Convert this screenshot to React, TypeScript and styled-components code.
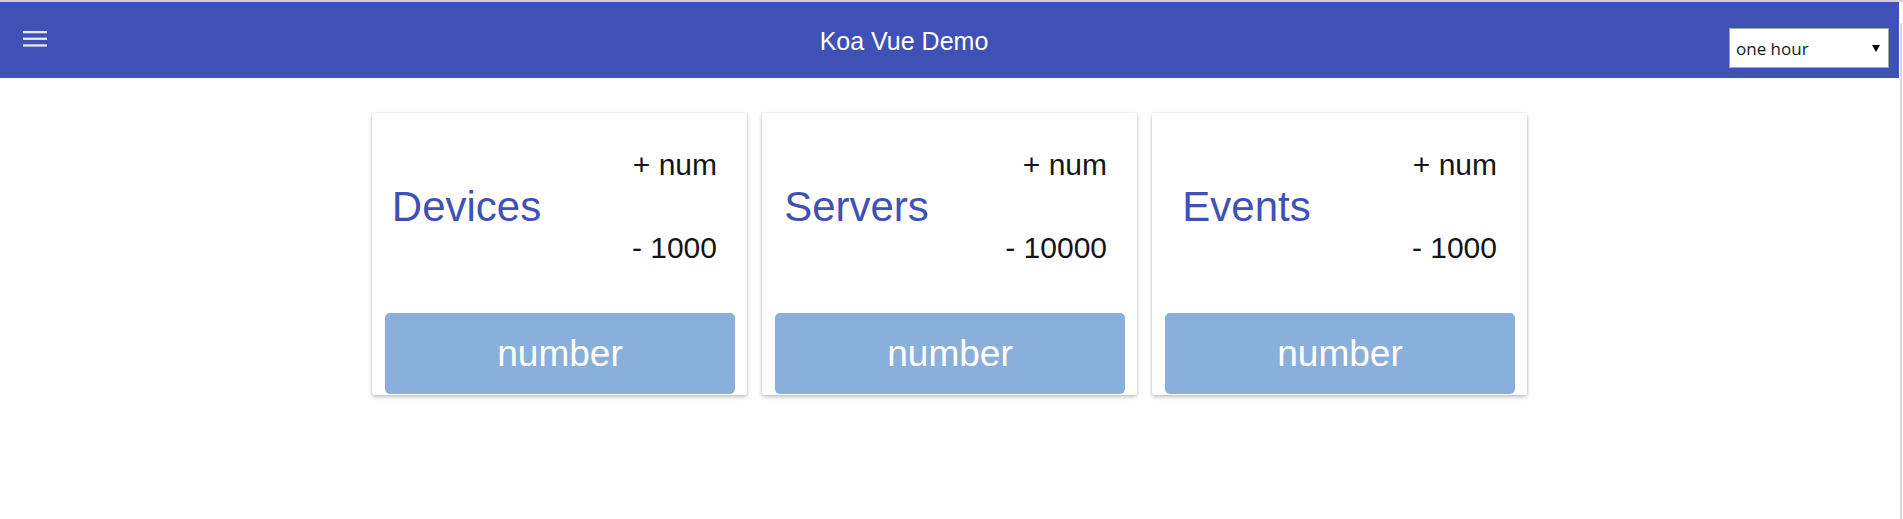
import React from "react";
import styled, { createGlobalStyle } from "styled-components";

const GlobalStyle = createGlobalStyle`
  html, body {
    margin: 0;
    padding: 0;
    background: #ffffff;
    font-family: "Liberation Sans", Arial, sans-serif;
  }
  * { box-sizing: border-box; }
`;

const Page = styled.div`
  display: flex;
  flex-direction: column;
  width: 1903px;
  height: 519px;
  overflow: hidden;
`;

const TopEdge = styled.div`
  height: 2px;
  background: #d2d2d2;
  flex: none;
`;

const Body = styled.div`
  flex: 1;
  display: flex;
`;

const Main = styled.div`
  width: 1899px;
  display: flex;
  flex-direction: column;
`;

const Gutter = styled.div`
  width: 4px;
  padding-top: 21px;
  display: flex;
`;

const GutterLine = styled.div`
  margin-left: 1px;
  width: 2px;
  background: #d6d6d6;
`;

const Toolbar = styled.header`
  height: 76px;
  background: #3f51b5;
  display: flex;
  align-items: center;
  padding-right: 10px;
`;

const MenuZone = styled.div`
  width: 79px;
  padding-left: 23px;
  display: flex;
  align-items: center;
  padding-bottom: 2px;
`;

const Title = styled.h1`
  flex: 1;
  margin: 0;
  text-align: center;
  color: #ffffff;
  font-size: 25px;
  font-weight: 400;
  line-height: 28px;
  padding-top: 1px;
`;

const SelectBox = styled.div`
  align-self: flex-end;
  margin-bottom: 10px;
  width: 160px;
  height: 40px;
  background: #ffffff;
  border: 1px solid #a6a6a6;
  display: flex;
  align-items: center;
  padding: 0 8px 0 6px;
`;

const NativeSelect = styled.select`
  flex: 1;
  appearance: none;
  -webkit-appearance: none;
  border: none;
  outline: none;
  background: transparent;
  padding: 0;
  margin: 0;
  font-family: "Open Sans", "Noto Sans", sans-serif;
  font-size: 17px;
  color: #1a1a1a;
  height: 100%;
`;

const Content = styled.main`
  padding-top: 35px;
  display: flex;
  justify-content: center;
  gap: 15px;
`;

const Card = styled.section`
  width: 375px;
  height: 282px;
  background: #ffffff;
  border-radius: 2px;
  box-shadow: 0 2px 4px rgba(0, 0, 0, 0.24), 0 0 2px rgba(0, 0, 0, 0.12);
  padding: 0 12px 1px 13px;
  display: flex;
  flex-direction: column;
`;

const Stats = styled.div`
  height: 200px;
  padding-bottom: 13px;
  display: grid;
  grid-template-columns: 163px 1fr;
  align-items: center;
`;

const CardTitle = styled.h2`
  margin: 0;
  text-align: center;
  color: #3f51b5;
  font-size: 42px;
  font-weight: 400;
  line-height: 46px;
`;

const Deltas = styled.div`
  display: flex;
  flex-direction: column;
  align-items: flex-end;
  gap: 49px;
  padding-right: 18px;
`;

const Delta = styled.div`
  font-size: 30px;
  line-height: 34px;
  color: #151515;
  white-space: pre;
`;

const NumberButton = styled.button`
  height: 81px;
  width: 100%;
  border: none;
  border-radius: 5px;
  background: #8aafda;
  color: #ffffff;
  font-family: "Liberation Sans", Arial, sans-serif;
  font-size: 37px;
  line-height: 40px;
  padding: 0;
  cursor: pointer;
`;

const MenuIcon = () => (
  <svg width="24" height="16" viewBox="0 0 24 16">
    <rect x="0" y="0" width="24" height="2.3" fill="#e8eaf6" />
    <rect x="0" y="6.6" width="24" height="2.3" fill="#e8eaf6" />
    <rect x="0" y="13.3" width="24" height="2.3" fill="#e8eaf6" />
  </svg>
);

const Arrow = () => (
  <svg width="8" height="7" viewBox="0 0 8 7">
    <polygon points="0,0 8,0 4,7" fill="#000000" />
  </svg>
);

const cards = [
  { title: "Devices", plus: "+ num", minus: "- 1000" },
  { title: "Servers", plus: "+ num", minus: "- 10000" },
  { title: "Events", plus: "+ num", minus: "- 1000" },
];

export default function App() {
  return (
    <>
      <GlobalStyle />
      <Page>
        <TopEdge />
        <Body>
          <Main>
            <Toolbar>
              <MenuZone>
                <MenuIcon />
              </MenuZone>
              <Title>Koa Vue Demo</Title>
              <SelectBox>
                <NativeSelect defaultValue="hour">
                  <option value="hour">one hour</option>
                  <option value="day">one day</option>
                  <option value="week">one week</option>
                </NativeSelect>
                <Arrow />
              </SelectBox>
            </Toolbar>
            <Content>
              {cards.map((c) => (
                <Card key={c.title}>
                  <Stats>
                    <CardTitle>{c.title}</CardTitle>
                    <Deltas>
                      <Delta>{c.plus}</Delta>
                      <Delta>{c.minus}</Delta>
                    </Deltas>
                  </Stats>
                  <NumberButton>number</NumberButton>
                </Card>
              ))}
            </Content>
          </Main>
          <Gutter>
            <GutterLine />
          </Gutter>
        </Body>
      </Page>
    </>
  );
}
